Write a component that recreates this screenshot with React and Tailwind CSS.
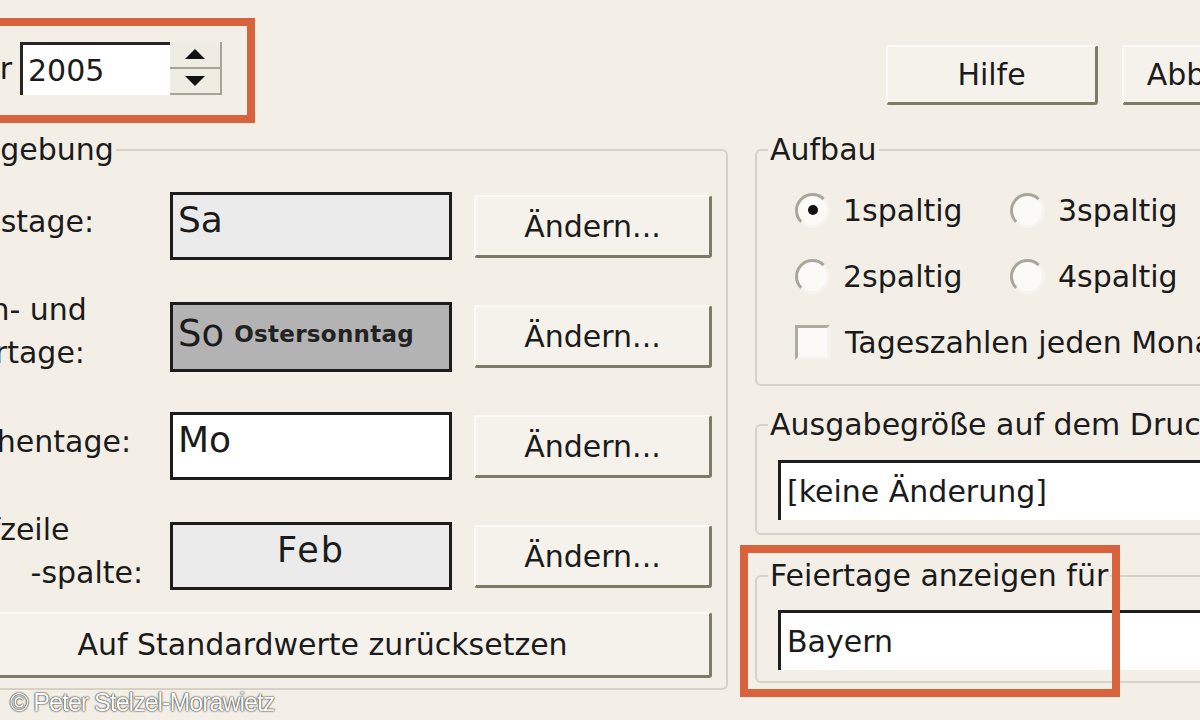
import React from 'react'

const font = { fontFamily: '"DejaVu Sans", Verdana, sans-serif' }

function XpButton({ children, className = '' }) {
  return (
    <button
      type="button"
      className={`flex items-center justify-center bg-[#f5f2eb] border-t-2 border-l-2 border-r-[3px] border-b-[3px] border-t-[#fbfaf6] border-l-[#fbfaf6] border-r-[#7d7a68] border-b-[#7d7a68] rounded-[3px] text-[30px] text-[#1b1b1b] ${className}`}
    >
      {children}
    </button>
  )
}

function Radio({ checked, label }) {
  return (
    <div className="flex h-[44px] items-center gap-[13px]">
      <span className="relative flex h-[35px] w-[35px] items-center justify-center rounded-full border-[3px] border-t-[#a9a69a] border-l-[#a9a69a] border-r-[#f6f4ee] border-b-[#f6f4ee] bg-[#fbfaf7]">
        {checked && <span className="h-[10px] w-[10px] rounded-full bg-[#111]" />}
      </span>
      <span className="text-[30px] text-[#1b1b1b]">{label}</span>
    </div>
  )
}

function Combo({ children }) {
  return (
    <div className="flex h-[60px] w-[500px] items-center border-t-[3px] border-l-[3px] border-[#1e1e1e] bg-white pl-[6px] text-[30px] text-[#1b1b1b]">
      {children}
    </div>
  )
}

function Group({ title, className = '', children }) {
  return (
    <fieldset className={`rounded-[6px] border-2 border-[#d6d2c7] ${className}`}>
      <legend className="ml-[11px] px-[2px] text-[30px] leading-[36px] text-[#1b1b1b]">{title}</legend>
      {children}
    </fieldset>
  )
}

function FieldRow({ label, box }) {
  return (
    <div className="flex h-[68px] items-start">
      <div className="flex h-[68px] w-[236px] items-center pb-[10px] text-[30px] leading-[43px] text-[#1b1b1b]">
        <span>{label}</span>
      </div>
      {box}
      <XpButton className="ml-[22px] mt-[3px] h-[63px] w-[238px]">Ändern...</XpButton>
    </div>
  )
}

export default function App() {
  return (
    <div style={font} className="relative h-[720px] w-[1200px] overflow-hidden bg-[#f3efe6] text-[#1b1b1b]">
      {/* top row */}
      <div className="flex h-[130px] items-start">
        <div className="ml-[-100px] mt-[18px] flex h-[105px] w-[355px] shrink-0 items-start border-[8px] border-[#d8623b] pt-[16px]">
          <div className="flex h-[53px] w-[104px] items-center justify-end text-[30px]">Jahr</div>
          <div className="ml-[8px] flex h-[53px] w-[150px] items-center border-t-[3px] border-l-[3px] border-[#262626] bg-white pl-[5px] text-[30px]">
            2005
          </div>
          <div className="flex h-[53px] w-[52px] flex-col">
            <div className="flex flex-1 items-center justify-center border-b-2 border-r-2 border-[#a7a497] bg-[#efece4]">
              <svg width="22" height="12" viewBox="0 0 22 12"><path d="M11 1 L21 11 L1 11 Z" fill="#111" /></svg>
            </div>
            <div className="flex flex-1 items-center justify-center border-b-2 border-r-2 border-[#a7a497] bg-[#efece4]">
              <svg width="22" height="12" viewBox="0 0 22 12"><path d="M1 1 L21 1 L11 11 Z" fill="#111" /></svg>
            </div>
          </div>
        </div>
        <XpButton className="ml-[631px] mt-[45px] h-[60px] w-[212px] shrink-0">Hilfe</XpButton>
        <XpButton className="ml-[24px] mt-[45px] h-[60px] w-[212px] shrink-0">Abbrechen</XpButton>
      </div>

      {/* main */}
      <div className="flex items-start">
        <fieldset className="ml-[-80px] mt-[2px] w-[808px] shrink-0 rounded-[6px] border-2 border-[#d6d2c7] pb-[10px]">
          <legend className="ml-[25px] px-[2px] text-[30px] leading-[36px]">Umgebung</legend>
          <div className="ml-[12px] mt-[24px] flex flex-col gap-[42px]">
            <FieldRow
              label="Samstage:"
              box={
                <div className="h-[68px] w-[282px] border-[3px] border-[#1c1c1c] bg-[#ebebeb] pl-[5px] text-[36px] leading-[50px]">Sa</div>
              }
            />
            <FieldRow
              label={<>Sonn- und<br />Feiertage:</>}
              box={
                <div className="flex h-[70px] w-[282px] items-center gap-[10px] border-[3px] border-[#1c1c1c] bg-[#b3b3b3] pl-[5px] pb-[6px]">
                  <span className="text-[37px]">So</span>
                  <span className="text-[23px] font-bold tracking-[0.3px] text-[#222]">Ostersonntag</span>
                </div>
              }
            />
            <FieldRow
              label="Wochentage:"
              box={
                <div className="h-[68px] w-[282px] border-[3px] border-[#1c1c1c] bg-white pl-[5px] text-[36px] leading-[50px]">Mo</div>
              }
            />
            <FieldRow
              label={<>Kopfzeile<br /><span className="[word-spacing:30px]">und -spalte:</span></>}
              box={
                <div className="h-[68px] w-[282px] border-[3px] border-[#1c1c1c] bg-[#ebebeb] text-center text-[35px] leading-[50px] tracking-[2px]">Feb</div>
              }
            />
          </div>
          <XpButton className="ml-[12px] mt-[22px] h-[66px] w-[778px]">Auf Standardwerte zurücksetzen</XpButton>
        </fieldset>

        <div className="ml-[27px] flex w-[520px] shrink-0 flex-col">
          <Group title="Aufbau" className="mt-[2px] pb-[20px]">
            <div className="ml-[38px] mt-[20px] grid grid-cols-[215px_1fr] gap-y-[22px]">
              <Radio checked label="1spaltig" />
              <Radio label="3spaltig" />
              <Radio label="2spaltig" />
              <Radio label="4spaltig" />
              <div className="col-span-2 flex h-[44px] items-center gap-[15px]">
                <span className="h-[35px] w-[35px] border-[3px] border-t-[#aeab9f] border-l-[#aeab9f] border-r-[#f5f3ed] border-b-[#f5f3ed] bg-[#fbfaf7]" />
                <span className="whitespace-nowrap text-[30px]">Tageszahlen jeden Monats</span>
              </div>
            </div>
          </Group>
          <Group title="Ausgabegröße auf dem Drucker" className="mt-[21px] pb-[13px]">
            <div className="ml-[21px] mt-[17px]">
              <Combo>[keine Änderung]</Combo>
            </div>
          </Group>
          <Group title="Feiertage anzeigen für" className="mt-[23px] pb-[11px]">
            <div className="ml-[21px] mt-[16px]">
              <Combo>Bayern</Combo>
            </div>
          </Group>
        </div>
      </div>

      {/* annotation frame */}
      <div className="absolute left-[740px] top-[545px] h-[152px] w-[380px] border-[8px] border-[#d8623b]" />

      <div
        className="absolute left-[10px] top-[684px] text-[25px] tracking-[-1px] text-white [text-shadow:0_0_2px_#222,0_0_1px_#000]"
        style={{ fontFamily: '"Liberation Sans", Arial, sans-serif' }}
      >
        © Peter Stelzel-Morawietz
      </div>
    </div>
  )
}
